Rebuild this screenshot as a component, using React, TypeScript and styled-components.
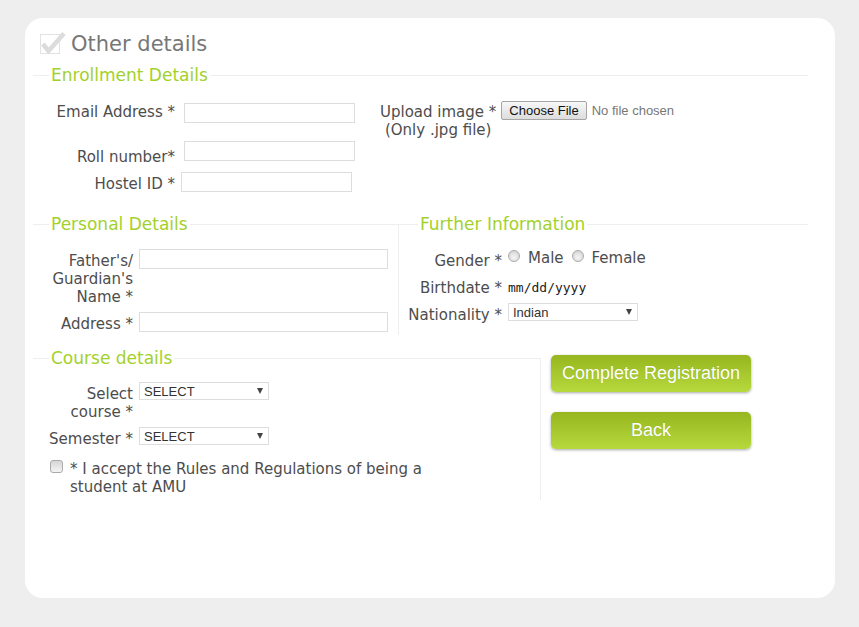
import React from 'react';
import styled, { createGlobalStyle } from 'styled-components';

const Global = createGlobalStyle`
  html, body { margin: 0; padding: 0; background: #eeeeee; }
  body { font-family: "DejaVu Sans", Verdana, sans-serif; color: #4d4d4d; }
  * { box-sizing: border-box; }
`;

const Card = styled.div`
  margin: 18px 0 0 25px;
  width: 810px;
  height: 580px;
  background: #ffffff;
  border-radius: 18px;
  padding: 13px 0 0 8px;
`;

const Title = styled.h2`
  margin: 0 0 8px 7px;
  height: 26px;
  display: flex;
  align-items: center;
  gap: 5px;
  font-weight: normal;
  font-size: 21px;
  line-height: 26px;
  color: #777777;
`;

const Fieldset = styled.fieldset<{ $w: number; $divider?: boolean; $pl?: number; $pb?: number }>`
  margin: 0;
  min-width: 0;
  width: ${(p) => p.$w}px;
  border: none;
  border-top: 1px solid #eeeeee;
  ${(p) => (p.$divider ? 'border-right: 1px solid #eeeeee;' : '')}
  padding: 0 0 ${(p) => p.$pb ?? 0}px ${(p) => p.$pl ?? 0}px;
`;

const Legend = styled.legend<{ $ml?: number }>`
  margin-left: ${(p) => p.$ml ?? 1}px;
  padding: 0 2px;
  font-size: 17px;
  line-height: 20px;
  color: #a3d12b;
`;

const Split = styled.div<{ $mt?: number }>`
  display: flex;
  align-items: flex-start;
  margin-top: ${(p) => p.$mt ?? 0}px;
`;

const Column = styled.div`
  display: flex;
  flex-direction: column;
`;

const Row = styled.div<{ $mt: number }>`
  display: flex;
  align-items: flex-start;
  margin-top: ${(p) => p.$mt}px;
`;

const Label = styled.label<{ $w: number; $pt?: number }>`
  flex: none;
  width: ${(p) => p.$w}px;
  padding-top: ${(p) => p.$pt ?? 0}px;
  text-align: right;
  font-size: 15px;
  line-height: 18px;
`;

const TextInput = styled.input<{ $w: number; $ml?: number }>`
  flex: none;
  width: ${(p) => p.$w}px;
  height: 20px;
  margin: 0 0 0 ${(p) => p.$ml ?? 6}px;
  padding: 0 4px;
  border: 1px solid #dddddd;
  background: #ffffff;
  font: 13px "Liberation Sans", Arial, sans-serif;
  color: #333333;
  outline: none;
`;

const Upload = styled.div`
  display: flex;
  align-items: flex-start;
  margin: 16px 0 0 25px;
`;

const UploadLabel = styled.label`
  padding-top: 2px;
  text-align: center;
  white-space: nowrap;
  font-size: 15px;
  line-height: 18px;
`;

const FileInput = styled.input`
  margin: 0 0 0 5px;
  width: 190px;
  font: 13px "Liberation Sans", Arial, sans-serif;
  color: #777777;
  &::file-selector-button {
    height: 19px;
    margin-right: 5px;
    padding: 0 7px;
    font: 13px "Liberation Sans", Arial, sans-serif;
    color: #111111;
    background: linear-gradient(#f7f7f7, #dddddd);
    border: 1px solid #a6a6a6;
    border-radius: 2px;
  }
`;

const RadioGroup = styled.div`
  display: flex;
  align-items: flex-start;
  margin-left: 6px;
  font-size: 15px;
  line-height: 18px;
`;

const Radio = styled.input`
  appearance: none;
  flex: none;
  width: 12px;
  height: 12px;
  margin: 1px 8px 0 0;
  border: 1px solid #aaaaaa;
  border-radius: 50%;
  background: radial-gradient(circle at 50% 65%, #f4f4f4 0%, #e0e0e0 55%, #c8c8c8 100%);
`;

const RadioText = styled.span`
  margin-right: 8px;
`;

const DateInput = styled.input`
  width: 100px;
  height: 18px;
  margin: 1px 0 0 6px;
  padding: 0;
  border: none;
  background: transparent;
  font: 13px/18px "DejaVu Sans Mono", "Liberation Mono", monospace;
  color: #222222;
  outline: none;
  &::placeholder { color: #222222; opacity: 1; }
`;

const SelectWrap = styled.div`
  position: relative;
  flex: none;
  width: 130px;
  height: 18px;
  margin-left: 6px;
  &::after {
    content: '';
    position: absolute;
    right: 6px;
    top: 6px;
    border-left: 3.5px solid transparent;
    border-right: 3.5px solid transparent;
    border-top: 6px solid #444444;
    pointer-events: none;
  }
`;

const Select = styled.select`
  appearance: none;
  display: block;
  width: 100%;
  height: 100%;
  margin: 0;
  padding: 0 0 0 4px;
  border: 1px solid #dddddd;
  border-radius: 0;
  background: #ffffff;
  font: 13px "Liberation Sans", Arial, sans-serif;
  color: #333333;
  outline: none;
`;

const TermsRow = styled.label`
  display: flex;
  align-items: flex-start;
  margin-top: 12px;
  padding-left: 2px;
  font-size: 15px;
  line-height: 18px;
`;

const Checkbox = styled.input`
  appearance: none;
  flex: none;
  width: 13px;
  height: 13px;
  margin: 0 7px 0 0;
  border: 1px solid #aaaaaa;
  border-radius: 3px;
  background: linear-gradient(#d6d6d6, #f4f4f4);
`;

const TermsText = styled.span`
  width: 356px;
`;

const Actions = styled.div`
  display: flex;
  flex-direction: column;
  gap: 20px;
  margin-left: 10px;
  padding-top: 7px;
`;

const ActionButton = styled.button`
  width: 200px;
  height: 37px;
  padding: 0;
  border: none;
  border-radius: 5px;
  background: linear-gradient(#97b61f, #b6d93d);
  box-shadow: 0 1px 3px rgba(0, 0, 0, 0.35);
  color: #ffffff;
  font: 18px "Liberation Sans", Arial, sans-serif;
  text-shadow: 0 0 1px rgba(0, 0, 0, 0.15);
  cursor: pointer;
`;

const CheckIcon = () => (
  <svg width="26" height="24" viewBox="0 0 26 24" aria-hidden="true">
    <rect x="0.5" y="2.5" width="19" height="19" fill="#ffffff" stroke="#e2e2e2" />
    <polyline points="3,12 8.5,19 24,1.5" fill="none" stroke="#dcdcdc" strokeWidth="4.5" />
  </svg>
);

export default function App() {
  return (
    <>
      <Global />
      <Card>
        <Title>
          <CheckIcon />
          Other details
        </Title>

        <Fieldset $w={775} $pl={12} $pb={21}>
          <Legend $ml={4}>Enrollment Details</Legend>
          <Split>
            <Column>
              <Row $mt={18}>
                <Label $w={130}>Email Address *</Label>
                <TextInput $w={171} $ml={9} type="email" />
              </Row>
              <Row $mt={18}>
                <Label $w={130} $pt={7}>Roll number*</Label>
                <TextInput $w={171} $ml={9} type="text" />
              </Row>
              <Row $mt={6}>
                <Label $w={130} $pt={3}>Hostel ID *</Label>
                <TextInput $w={171} $ml={6} type="text" />
              </Row>
            </Column>
            <Upload>
              <UploadLabel>
                Upload image *<br />(Only .jpg file)
              </UploadLabel>
              <FileInput type="file" accept=".jpg" />
            </Upload>
          </Split>
        </Fieldset>

        <Split>
          <Fieldset $w={366} $divider $pl={15} $pb={2}>
            <Legend>Personal Details</Legend>
            <Row $mt={15}>
              <Label $w={85} $pt={3}>Father's/ Guardian's Name *</Label>
              <TextInput $w={249} type="text" />
            </Row>
            <Row $mt={6}>
              <Label $w={85} $pt={3}>Address *</Label>
              <TextInput $w={249} type="text" />
            </Row>
          </Fieldset>
          <Fieldset $w={409} $pl={6}>
            <Legend $ml={13}>Further Information</Legend>
            <Row $mt={15}>
              <Label $w={97} $pt={3}>Gender *</Label>
              <RadioGroup>
                <Radio type="radio" name="gender" />
                <RadioText>Male</RadioText>
                <Radio type="radio" name="gender" />
                <RadioText>Female</RadioText>
              </RadioGroup>
            </Row>
            <Row $mt={8}>
              <Label $w={97} $pt={1}>Birthdate *</Label>
              <DateInput type="text" placeholder="mm/dd/yyyy" />
            </Row>
            <Row $mt={6}>
              <Label $w={97} $pt={3}>Nationality *</Label>
              <SelectWrap>
                <Select defaultValue="Indian">
                  <option>Indian</option>
                </Select>
              </SelectWrap>
            </Row>
          </Fieldset>
        </Split>

        <Split $mt={13}>
          <Fieldset $w={508} $divider $pl={15} $pb={4}>
            <Legend>Course details</Legend>
            <Row $mt={14}>
              <Label $w={85} $pt={3}>Select course *</Label>
              <SelectWrap>
                <Select defaultValue="SELECT">
                  <option>SELECT</option>
                </Select>
              </SelectWrap>
            </Row>
            <Row $mt={6}>
              <Label $w={85} $pt={3}>Semester *</Label>
              <SelectWrap>
                <Select defaultValue="SELECT">
                  <option>SELECT</option>
                </Select>
              </SelectWrap>
            </Row>
            <TermsRow>
              <Checkbox type="checkbox" />
              <TermsText>* I accept the Rules and Regulations of being a student at AMU</TermsText>
            </TermsRow>
          </Fieldset>
          <Actions>
            <ActionButton type="submit">Complete Registration</ActionButton>
            <ActionButton type="button">Back</ActionButton>
          </Actions>
        </Split>
      </Card>
    </>
  );
}
